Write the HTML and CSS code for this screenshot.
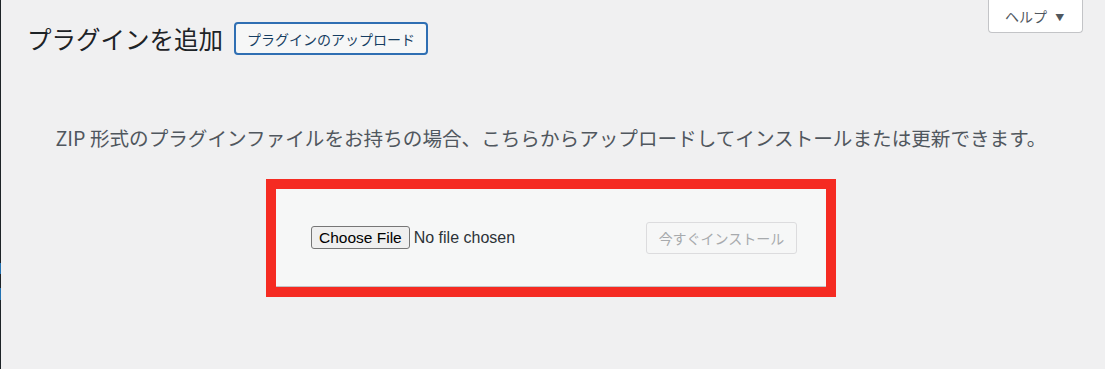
FILE: index.html
```
<!DOCTYPE html>
<html lang="ja">
<head>
  <meta charset="UTF-8">
  <meta name="viewport" content="width=device-width, initial-scale=1.0">
  <title>プラグインを追加</title>
  <link rel="stylesheet" href="styles.css">
</head>
<body>
  <div class="admin">
    <div class="menu-edge">
      <span class="menu-current first"></span>
      <span class="menu-current"></span>
    </div>

    <div class="content">
      <div class="page-head">
        <div class="title-group">
          <h1>プラグインを追加</h1>
          <button class="upload-toggle">プラグインのアップロード</button>
        </div>
        <button class="help-tab">ヘルプ <span class="arrow">▼</span></button>
      </div>

      <div class="upload-plugin">
        <p class="install-help">ZIP 形式のプラグインファイルをお持ちの場合、こちらからアップロードしてインストールまたは更新できます。</p>
        <div class="highlight">
          <form class="upload-form">
            <input type="file" id="pluginzip" name="pluginzip" accept=".zip">
            <button type="submit" class="install-btn" disabled>今すぐインストール</button>
          </form>
        </div>
      </div>
    </div>
  </div>
</body>
</html>
```

FILE: styles.css
```
body {
  margin: 0;
  background-color: #f0f0f1;
  font-family: 'Noto Sans CJK JP', 'Noto Sans', sans-serif;
  color: #1d2327;
  height: 369px;
  overflow: hidden;
}
.admin {
  display: flex;
  height: 369px;
}
.menu-edge {
  width: 1px;
  background: #1d2327;
  display: flex;
  flex-direction: column;
}
.menu-current {
  display: block;
  height: 11px;
  background: #2271b1;
}
.menu-current.first {
  margin-top: 263px;
  margin-bottom: 14px;
}
.menu-current + .menu-current {
  height: 12px;
}
.content {
  flex: 1;
  padding: 0 22px 0 26px;
}
.page-head {
  display: flex;
  justify-content: space-between;
  align-items: flex-start;
}
.title-group {
  display: flex;
  align-items: center;
  gap: 11px;
  padding-top: 22px;
}
h1 {
  margin: 0;
  font-size: 24.5px;
  font-weight: 400;
  line-height: 33px;
  color: #1d2327;
}
.upload-toggle {
  height: 33px;
  padding: 0 11px;
  font-family: inherit;
  font-size: 14px;
  color: #163e62;
  background: #f6f7f7;
  border: 2px solid #2f6fb3;
  border-radius: 4px;
}
.help-tab {
  width: 95px;
  height: 33px;
  margin-top: 0;
  padding: 0 0 0 16px;
  text-align: left;
  font-family: inherit;
  font-size: 14px;
  color: #50575e;
  background: #ffffff;
  border: 1px solid #c3c4c7;
  border-top: none;
  border-radius: 0 0 4px 4px;
}
.help-tab .arrow {
  font-size: 9px;
  margin-left: 5px;
  vertical-align: 1px;
}
.upload-plugin {
  padding-right: 8px;
}
.install-help {
  margin: 69px 0 27px;
  text-align: center;
  font-size: 19.6px;
  line-height: 28px;
  color: #50575e;
}
.highlight {
  width: 550px;
  margin: 0 auto;
  border: 10px solid #f52b22;
}
.upload-form {
  height: 97px;
  margin: 0;
  padding: 0 29px 0 35px;
  display: flex;
  align-items: center;
  justify-content: space-between;
  background: #f6f7f7;
  border-bottom: 1px solid #c3c4c7;
}
input[type=file] {
  font-family: 'Liberation Sans', Arial, sans-serif;
  font-size: 16px;
  color: #2c3338;
}
input[type=file]::file-selector-button {
  height: 23px;
  margin-right: 4px;
  padding: 0 7px;
  font-family: 'Liberation Sans', Arial, sans-serif;
  font-size: 15.5px;
  color: #000000;
  background: #efefef;
  border: 1px solid #767676;
  border-radius: 3px;
}
.install-btn {
  width: 151px;
  height: 32px;
  padding: 0;
  font-family: inherit;
  font-size: 14px;
  color: #a7aaad;
  background: #f6f7f7;
  border: 1px solid #dcdcde;
  border-radius: 3px;
}
```
